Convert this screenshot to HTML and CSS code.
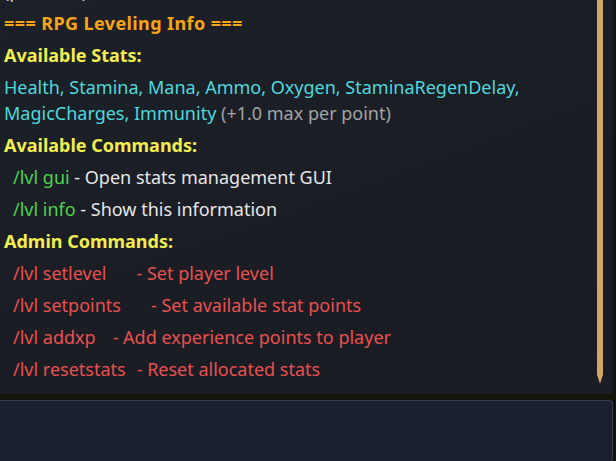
FILE: index.html
```html
<!DOCTYPE html>
<html>
<head>
<meta charset="utf-8">
<link rel="stylesheet" href="styles.css">
</head>
<body>
<div class="app">
  <div class="chat">
    <div class="log">
      <div class="msg gray prev">(previous)</div>
      <div class="msg gold">=== RPG Leveling Info ===</div>
      <div class="msg yellow bold">Available Stats:</div>
      <div class="msg"><span class="aqua">Health, Stamina, Mana, Ammo, Oxygen, StaminaRegenDelay,<br>MagicCharges, Immunity</span> <span class="gray">(+1.0 max per point)</span></div>
      <div class="msg yellow bold">Available Commands:</div>
      <div class="msg cmd"><span class="green">/lvl gui</span><span class="white"> - Open stats management GUI</span></div>
      <div class="msg cmd"><span class="green">/lvl info</span><span class="white"> - Show this information</span></div>
      <div class="msg yellow bold">Admin Commands:</div>
      <div class="msg cmd red"><span>/lvl setlevel</span><span class="desc wide">- Set player level</span></div>
      <div class="msg cmd red"><span>/lvl setpoints</span><span class="desc wide">- Set available stat points</span></div>
      <div class="msg cmd red"><span>/lvl addxp</span><span class="desc mid">- Add experience points to player</span></div>
      <div class="msg cmd red"><span>/lvl resetstats</span><span class="desc narrow">- Reset allocated stats</span></div>
    </div>
    <div class="scrollbar"></div>
  </div>
  <div class="input"></div>
</div>
</body>
</html>
```
FILE: styles.css
```css
* { box-sizing: border-box; }
html, body { margin: 0; padding: 0; }
body {
  width: 616px;
  height: 461px;
  overflow: hidden;
  background: #121309;
  font-family: "Noto Sans", "Open Sans", sans-serif;
  font-size: 18px;
}
.app {
  display: flex;
  flex-direction: column;
  gap: 6px;
  width: 613px;
}
.chat {
  position: relative;
  height: 394px;
  overflow: hidden;
  background: linear-gradient(160deg, #1c2028 0%, #1a1d24 60%, #191c23 100%);
  border-bottom-right-radius: 4px;
}
.log {
  display: flex;
  flex-direction: column;
  gap: 6px;
  margin-top: -22px;
  padding-left: 4px;
}
.msg {
  line-height: 26px;
  white-space: pre;
  color: #e6e6e6;
}
.gold { color: #f7a514; font-weight: 700; letter-spacing: 0.4px; }
.yellow { color: #f2ee4e; }
.bold { font-weight: 700; }
.aqua { color: #4ed8dc; }
.gray { color: #a4a4a4; }
.green { color: #4cd44c; }
.white { color: #e6e6e6; }
.red { color: #e9504f; }
.cmd { padding-left: 9px; }
.desc { display: inline-block; }
.wide { margin-left: 30px; }
.mid { margin-left: 17px; }
.narrow { margin-left: 11px; }
.prev { color: #cfcfcf; }
.scrollbar {
  position: absolute;
  top: 0;
  right: 10px;
  width: 6px;
  height: 384px;
  background: #d1a865;
  clip-path: polygon(0 0, 100% 0, 100% 97.5%, 50% 100%, 0 97.5%);
}
.input {
  height: 62px;
  background: #1b2031;
  border: 1px solid #34425b;
  border-left: none;
  border-radius: 0 4px 4px 0;
}
```
